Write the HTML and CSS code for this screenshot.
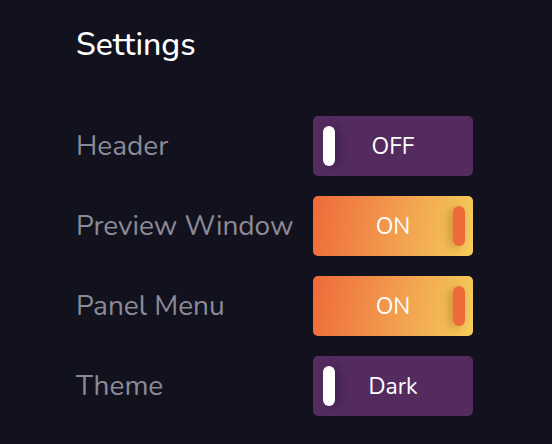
FILE: index.html
```html
<!DOCTYPE html>
<html lang="en">
<head>
  <meta charset="UTF-8" />
  <meta name="viewport" content="width=device-width, initial-scale=1.0" />
  <title>Settings</title>
  <link rel="stylesheet" href="styles.css">
</head>
<body>
  <div class="panel">
    <h1>Settings</h1>
    <div class="rows">
      <div class="row">
        <span class="label">Header</span>
        <div class="toggle off"><span class="knob"></span>OFF</div>
      </div>
      <div class="row">
        <span class="label">Preview Window</span>
        <div class="toggle on">ON<span class="knob"></span></div>
      </div>
      <div class="row">
        <span class="label">Panel Menu</span>
        <div class="toggle on">ON<span class="knob"></span></div>
      </div>
      <div class="row">
        <span class="label">Theme</span>
        <div class="toggle off"><span class="knob"></span>Dark</div>
      </div>
    </div>
  </div>
</body>
</html>
```

FILE: styles.css
```css
body {
  margin: 0;
  background: #12111e;
  font-family: "Nunito", "Lato", "Open Sans", sans-serif;
  height: 100vh;
}
.panel {
  padding: 25px 0 0 76px;
}
h1 {
  margin: 0;
  color: #fff;
  font-size: 32px;
  font-weight: 500;
  line-height: 40px;
}
.rows {
  margin-top: 51px;
  display: flex;
  flex-direction: column;
  gap: 20px;
}
.row {
  display: flex;
  align-items: center;
  height: 60px;
}
.label {
  width: 237px;
  color: #8b8a96;
  font-size: 28px;
}
.toggle {
  position: relative;
  width: 160px;
  height: 60px;
  border-radius: 5px;
  display: flex;
  align-items: center;
  justify-content: center;
  color: #fff;
  font-size: 23px;
}
.toggle.off {
  background: #532b5f;
}
.toggle.on {
  background: linear-gradient(100deg, #ee6a3a 0%, #f2a04f 55%, #f5cd5a 100%);
}
.knob {
  position: absolute;
  top: 10px;
  width: 12px;
  height: 40px;
  border-radius: 6px;
}
.off .knob {
  left: 10px;
  background: #fff;
  box-shadow: 4px 0 8px rgba(0, 0, 0, 0.25);
}
.on .knob {
  right: 8px;
  background: #ee6a3a;
  box-shadow: -4px 2px 8px rgba(120, 60, 0, 0.3);
}
```
